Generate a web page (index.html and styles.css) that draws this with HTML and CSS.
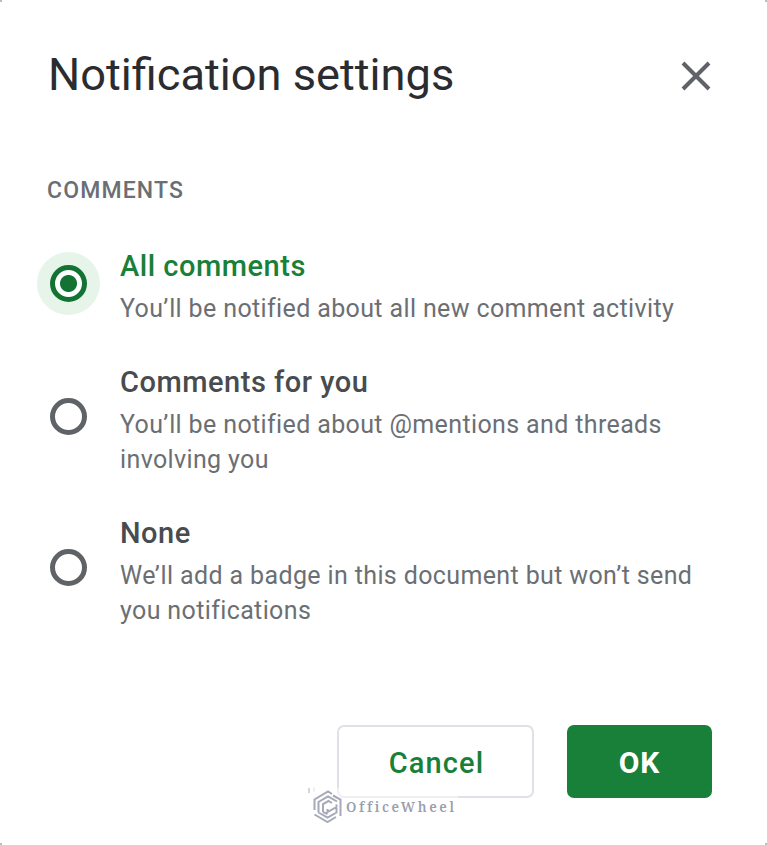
FILE: index.html
```html
<!DOCTYPE html>
<html lang="en">
<head>
<meta charset="utf-8">
<title>Notification settings</title>
<link rel="stylesheet" href="styles.css">
</head>
<body>
<main class="dialog">
  <header class="header">
    <h1 class="title">Notification settings</h1>
    <svg class="close" viewBox="0 0 30 30" aria-label="Close"><path d="M2 2L28 28M28 2L2 28"/></svg>
  </header>
  <h2 class="section">COMMENTS</h2>
  <div class="options">
    <div class="option selected">
      <span class="radio"></span>
      <div class="copy">
        <div class="label">All comments</div>
        <div class="desc">You’ll be notified about all new comment activity</div>
      </div>
    </div>
    <div class="option">
      <span class="radio"></span>
      <div class="copy">
        <div class="label">Comments for you</div>
        <div class="desc">You’ll be notified about @mentions and threads<br>involving you</div>
      </div>
    </div>
    <div class="option">
      <span class="radio"></span>
      <div class="copy">
        <div class="label">None</div>
        <div class="desc">We’ll add a badge in this document but won’t send<br>you notifications</div>
      </div>
    </div>
  </div>
  <footer class="actions">
    <button class="button cancel">Cancel</button>
    <button class="button ok">OK</button>
  </footer>
  <div class="watermark">
    <svg class="mark" viewBox="0 0 29 33">
      <path d="M1.500 20V9.500L15 1.500L19 4M1.500 24.500L14.500 32L23 27M27.500 26V9.500L20 5.500M5.500 22.500V12L15 6.500L24 11.500M5.500 22.500L14.500 27.500L23.500 22.500V18M10 22V14L15.500 11L19 13M10 22L14.500 24M14.500 19V22L23.500 17V14.500"/>
    </svg>
    <span class="brand">OfficeWheel</span>
  </div>
  <i class="corner tl"></i><i class="corner tr"></i><i class="corner bl"></i><i class="corner br"></i>
</main>
</body>
</html>
```
FILE: styles.css
```css
* { box-sizing: border-box; }
body { margin: 0; background: #fff; font-family: Roboto, sans-serif; }
.dialog {
  position: relative;
  width: 767px;
  height: 845px;
  padding: 45px 55px 0 47px;
  overflow: hidden;
}
.header { display: flex; justify-content: space-between; align-items: center; height: 60px; }
.title { margin: 0 0 0 1px; font-size: 45.2px; font-weight: 400; line-height: 60px; color: #2b2c30; white-space: nowrap; }
.close { width: 30px; height: 30px; margin: 1px 1px 0 0; }
.close path { fill: none; stroke: #5f6368; stroke-width: 4; }
.section { margin: 71px 0 0; font-size: 23px; font-weight: 500; line-height: 30px; letter-spacing: 1.15px; color: #6b6f74; }
.options { display: flex; flex-direction: column; gap: 38px; margin-top: 42px; }
.option { display: flex; align-items: center; gap: 33px; }
.radio {
  flex: none;
  width: 37px;
  height: 37px;
  margin: 0 0 8px 3px;
  border: 5px solid #5f6368;
  border-radius: 50%;
}
.selected .radio {
  border-color: #137333;
  background: radial-gradient(circle, #137333 8px, #fff 9px);
  box-shadow: 0 0 0 13px #e6f4ea;
}
.copy { white-space: nowrap; }
.label { font-size: 29px; font-weight: 500; line-height: 36px; color: #484b4f; letter-spacing: .52px; }
.selected .label { color: #188038; }
.desc { margin-top: 7px; font-size: 25px; line-height: 35px; color: #6b6f74; letter-spacing: .37px; }
.actions { display: flex; justify-content: flex-end; gap: 33px; margin-top: 97px; }
.button { height: 73px; border-radius: 7px; font: 500 29px/69px Roboto, sans-serif; padding: 2px 0 0; }
.cancel { width: 197px; background: #fff; border: 2px solid #e0e1e6; color: #188038; letter-spacing: 1.1px; padding-left: 2px; }
.ok { width: 145px; background: #188038; border: 0; color: #fff; font-size: 30px; font-weight: 700; letter-spacing: .8px; }
.watermark { position: absolute; left: 308px; top: 788px; display: flex; align-items: center; gap: 4px; width: 150px; height: 37px; padding-left: 5px; background: rgba(255, 255, 255, .5); }
.watermark::before { content: ""; position: absolute; left: 0; top: 0; width: 2px; height: 5px; background: #d5d6da; box-shadow: 5px -1px 0 -.5px #dedfe3; }
.mark { flex: none; width: 29px; height: 33px; }
.mark path { fill: none; stroke: #a5a9b8; stroke-width: 2; }
.brand { font: 600 13.5px/20px "Noto Serif", "DejaVu Serif", "Liberation Serif", serif; letter-spacing: 2.6px; color: #9a9fb0; }
.corner { position: absolute; width: 2px; height: 2px; background: #bdbdbd; }
.tl { left: 0; top: 0; }
.tr { right: 0; top: 0; }
.bl { left: 0; bottom: 0; }
.br { right: 0; bottom: 0; }
```
